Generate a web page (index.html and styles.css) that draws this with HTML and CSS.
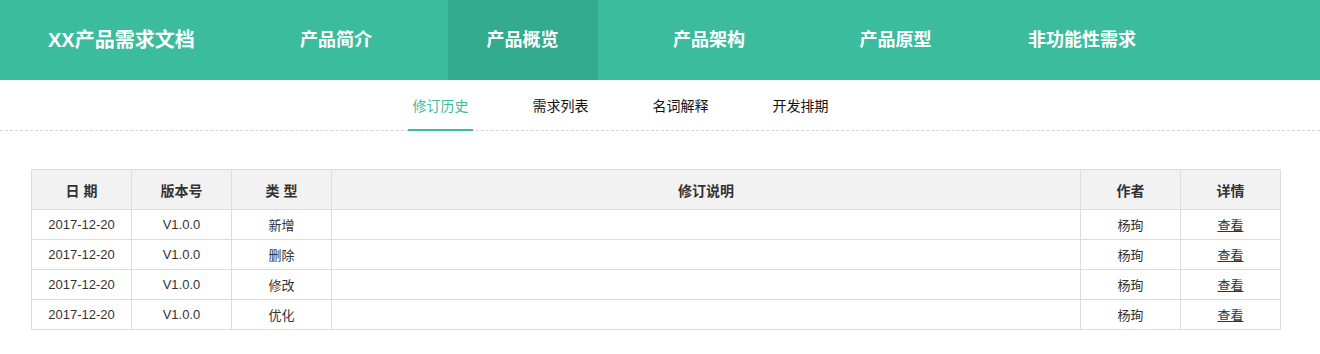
FILE: index.html
```html
<!DOCTYPE html>
<html lang="zh-CN">
<head>
    <meta charset="utf-8">
    <title>XX产品需求文档</title>
    <link rel="stylesheet" href="styles.css">
</head>
<body>
<div class="header">
    <div class="logo">XX产品需求文档</div>
    <ul class="nav">
        <li><a href="#">产品简介</a></li>
        <li class="active"><a href="#">产品概览</a></li>
        <li><a href="#">产品架构</a></li>
        <li><a href="#">产品原型</a></li>
        <li><a href="#">非功能性需求</a></li>
    </ul>
</div>
<div class="subnav">
    <a href="#" class="current">修订历史</a>
    <a href="#">需求列表</a>
    <a href="#">名词解释</a>
    <a href="#">开发排期</a>
</div>
<div class="content">
    <table class="history">
        <thead>
        <tr>
            <th class="w100">日 期</th>
            <th class="w100">版本号</th>
            <th class="w100">类 型</th>
            <th>修订说明</th>
            <th class="w100">作者</th>
            <th class="w100">详情</th>
        </tr>
        </thead>
        <tbody>
        <tr><td>2017-12-20</td><td>V1.0.0</td><td>新增</td><td></td><td>杨珣</td><td><a href="#">查看</a></td></tr>
        <tr><td>2017-12-20</td><td>V1.0.0</td><td>删除</td><td></td><td>杨珣</td><td><a href="#">查看</a></td></tr>
        <tr><td>2017-12-20</td><td>V1.0.0</td><td>修改</td><td></td><td>杨珣</td><td><a href="#">查看</a></td></tr>
        <tr><td>2017-12-20</td><td>V1.0.0</td><td>优化</td><td></td><td>杨珣</td><td><a href="#">查看</a></td></tr>
        </tbody>
    </table>
</div>
</body>
</html>
```

FILE: styles.css
```css
body {
    margin: 0;
    font-family: "Liberation Sans", "Noto Sans CJK SC", sans-serif;
    color: #333;
    background: #fff;
}
a {
    color: inherit;
    text-decoration: none;
}
.header {
    display: flex;
    height: 80px;
    background-color: #3bbd9d;
    color: #fff;
}
.logo {
    padding-left: 48px;
    width: 148px;
    margin-right: 65px;
    line-height: 80px;
    font-size: 20px;
    font-weight: bold;
    white-space: nowrap;
}
.nav {
    display: flex;
    gap: 36.5px;
    margin: 0;
    padding: 0;
    list-style: none;
}
.nav li {
    width: 150px;
    text-align: center;
    line-height: 80px;
    font-size: 18px;
    font-weight: bold;
}
.nav li.active {
    background-color: #33ac8e;
}
.subnav {
    display: flex;
    justify-content: center;
    gap: 55px;
    padding-right: 79px;
    height: 50px;
    border-bottom: 1px dashed #d4d4d4;
}
.subnav a {
    width: 56px;
    padding: 0 4.5px;
    text-align: center;
    line-height: 52px;
    font-size: 14px;
    color: #111;
}
.subnav a.current {
    color: #3bbd9d;
    border-bottom: 2px solid #3bbd9d;
    margin-bottom: -1px;
}
.content {
    padding: 38px 31px;
}
.history {
    width: 1250px;
    border-collapse: collapse;
    font-size: 13px;
    text-align: center;
}
.history th,
.history td {
    border: 1px solid #dcdcdc;
    padding: 0;
}
.history th {
    height: 39px;
    background-color: #f2f2f2;
    font-size: 14px;
    font-weight: bold;
}
.history td {
    height: 29px;
}
.history th.w100 {
    width: 99px;
}
.history td a {
    text-decoration: underline;
}
```
